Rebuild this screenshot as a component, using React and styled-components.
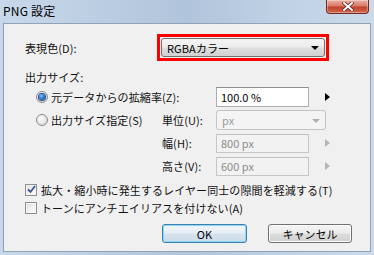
import React, { useState } from "react";
import styled, { createGlobalStyle } from "styled-components";

const GlobalStyle = createGlobalStyle`
  html, body {
    margin: 0;
    padding: 0;
    background: #ffffff;
  }
  body {
    font-family: "Noto Sans CJK JP", "Liberation Sans", sans-serif;
    font-size: 11px;
    color: #000;
  }
  * {
    box-sizing: border-box;
  }
`;

const Window = styled.div`
  width: 374px;
  height: 255px;
  display: flex;
  flex-direction: column;
  padding: 0 3px 3px 3px;
  background: linear-gradient(
    90deg,
    #c8d8ea 0%,
    #bccee2 25%,
    #b0c4db 50%,
    #bfd1e4 75%,
    #ccdaea 100%
  );
`;

const TitleBar = styled.div`
  height: 23px;
  display: flex;
  justify-content: space-between;
  align-items: flex-start;
`;

const Title = styled.div`
  padding-top: 3px;
  font-size: 12px;
  line-height: 15px;
  color: #000;
  letter-spacing: 0.2px;
`;

const CloseButton = styled.div`
  width: 43px;
  height: 14px;
  margin-right: 2px;
  display: flex;
  align-items: center;
  justify-content: center;
  border: 1px solid #6e2b22;
  border-top: none;
  border-radius: 0 0 4px 4px;
  background: linear-gradient(
    180deg,
    #eab1a4 0%,
    #d97a66 45%,
    #c2432d 55%,
    #d4664e 100%
  );
  box-shadow: inset 0 0 0 1px rgba(255, 255, 255, 0.35);
`;

const Client = styled.div`
  flex: 1;
  border: 1px solid #8ea2b8;
  background: #f0f0f0;
  padding: 10px 18px 0 21px;
  display: flex;
  flex-direction: column;
  letter-spacing: 0.1px;
  color: #111;
`;

const Row = styled.div`
  display: flex;
  align-items: center;
  height: ${(p) => p.$height || 20}px;
  margin-top: ${(p) => p.$top || 0}px;
  padding-left: ${(p) => p.$indent || 0}px;
`;

const Label = styled.span`
  width: ${(p) => (p.$width ? `${p.$width}px` : "auto")};
  flex-shrink: 0;
  line-height: 14px;
  white-space: nowrap;
`;

const Highlight = styled.div`
  width: 172px;
  height: 27px;
  border: 3px solid #ff0000;
  padding: 1px;
  background: #f0f0f0;
`;

const Combo = styled.div`
  width: ${(p) => (p.$width ? `${p.$width}px` : "100%")};
  height: ${(p) => p.$h || 19}px;
  display: flex;
  align-items: center;
  justify-content: space-between;
  padding: 0 5px 0 5px;
  border: 1px solid ${(p) => (p.$disabled ? "#c4c4c4" : "#707070")};
  border-radius: 3px;
  color: ${(p) => (p.$disabled ? "#9a9a9a" : "#000")};
  background: ${(p) =>
    p.$disabled
      ? "#f4f4f4"
      : "linear-gradient(180deg, #f4f4f4 0%, #ececec 48%, #dddddd 52%, #d2d2d2 100%)"};
  line-height: 14px;
`;

const DownArrow = styled.span`
  width: 0;
  height: 0;
  border-left: 4px solid transparent;
  border-right: 4px solid transparent;
  border-top: 4px solid ${(p) => (p.$disabled ? "#b0b0b0" : "#000")};
  margin-top: 1px;
`;

const TextBox = styled.div`
  width: 93px;
  height: ${(p) => p.$h || 20}px;
  display: flex;
  align-items: center;
  padding-left: 4px;
  border: 1px solid ${(p) => (p.$disabled ? "#c6c6c6" : "#abadb3")};
  border-top-color: ${(p) => (p.$disabled ? "#c0c0c0" : "#8e8f8f")};
  background: ${(p) => (p.$disabled ? "#f2f2f2" : "#ffffff")};
  color: ${(p) => (p.$disabled ? "#8c8c8c" : "#000")};
  line-height: 14px;
  letter-spacing: 0;
`;

const SpinArrow = styled.span`
  width: 0;
  height: 0;
  margin-left: 16px;
  border-top: 4px solid transparent;
  border-bottom: 4px solid transparent;
  border-left: 5px solid ${(p) => (p.$disabled ? "#b4b4b4" : "#000")};
`;

const RadioOption = styled.label`
  width: ${(p) => p.$width}px;
  display: flex;
  align-items: center;
  gap: 3px;
  flex-shrink: 0;
  line-height: 14px;
  white-space: nowrap;
`;

const RadioCircle = styled.span`
  width: 12px;
  height: 12px;
  border-radius: 50%;
  border: 1px solid #8a8a8a;
  background: radial-gradient(circle at 40% 35%, #ffffff 0%, #e4e4e4 60%, #cfcfcf 100%);
  display: flex;
  align-items: center;
  justify-content: center;
  flex-shrink: 0;
`;

const RadioDot = styled.span`
  width: 6px;
  height: 6px;
  border-radius: 50%;
  background: radial-gradient(circle at 40% 35%, #7fc3ff 0%, #1f6fd0 55%, #0b3f8a 100%);
  box-shadow: 0 0 0 1px #2a4f86;
`;

const CheckRow = styled.label`
  display: flex;
  align-items: center;
  gap: 4px;
  height: 15px;
  margin-top: ${(p) => p.$top || 0}px;
  line-height: 14px;
  white-space: nowrap;
`;

const CheckBox = styled.span`
  width: 12px;
  height: 12px;
  border: 1px solid #8e8f8f;
  background: linear-gradient(135deg, #dcdcdc 0%, #f4f4f4 60%, #ffffff 100%);
  box-shadow: inset 0 0 0 1px #f4f4f4;
  display: flex;
  align-items: center;
  justify-content: center;
  flex-shrink: 0;
`;

const ButtonRow = styled.div`
  display: flex;
  justify-content: flex-end;
  gap: 21px;
  margin-top: 9px;
`;

const Button = styled.button`
  width: ${(p) => p.$width}px;
  height: 19px;
  padding: 0;
  font-family: inherit;
  font-size: 11px;
  line-height: 14px;
  color: #000;
  border-radius: 3px;
  border: 1px solid ${(p) => (p.$default ? "#3c7fb1" : "#707070")};
  background: ${(p) =>
    p.$default
      ? "linear-gradient(180deg, #f0f6fa 0%, #e5eef5 48%, #d6e3ee 52%, #cbdbe8 100%)"
      : "linear-gradient(180deg, #f4f4f4 0%, #ececec 48%, #dddddd 52%, #d0d0d0 100%)"};
  box-shadow: ${(p) =>
    p.$default ? "inset 0 0 0 1px #8fd6f5" : "inset 0 0 0 1px #fbfbfb"};
`;

const Radio = ({ checked, width, children }) => (
  <RadioOption $width={width}>
    <RadioCircle>{checked && <RadioDot />}</RadioCircle>
    {children}
  </RadioOption>
);

const Check = ({ checked, top, children }) => (
  <CheckRow $top={top}>
    <CheckBox>
      {checked && (
        <svg width="9" height="9" viewBox="0 0 9 9">
          <path d="M1 4.5 L3.5 7 L8 1" fill="none" stroke="#3a5694" strokeWidth="1.8" />
        </svg>
      )}
    </CheckBox>
    {children}
  </CheckRow>
);

const App = () => {
  const [mode] = useState("scale");

  return (
    <>
      <GlobalStyle />
      <Window>
        <TitleBar>
          <Title>PNG 設定</Title>
          <CloseButton>
            <svg width="12" height="9" viewBox="0 0 12 9">
              <path
                d="M2 1 L10 8 M10 1 L2 8"
                stroke="#5a2018"
                strokeWidth="3.4"
                strokeLinecap="square"
              />
              <path
                d="M2 1 L10 8 M10 1 L2 8"
                stroke="#ffffff"
                strokeWidth="2"
                strokeLinecap="square"
              />
            </svg>
          </CloseButton>
        </TitleBar>
        <Client>
          <Row $height={27}>
            <Label $width={132}>表現色(D):</Label>
            <Highlight>
              <Combo>
                <span>RGBAカラー</span>
                <DownArrow />
              </Combo>
            </Highlight>
          </Row>

          <Row $height={14} $top={9}>
            <Label>出力サイズ:</Label>
          </Row>

          <Row $top={3} $indent={11}>
            <Radio checked={mode === "scale"} width={180}>
              元データからの拡縮率(Z):
            </Radio>
            <TextBox>100.0 %</TextBox>
            <SpinArrow />
          </Row>

          <Row $top={3} $indent={11}>
            <Radio checked={mode === "size"} width={126}>
              出力サイズ指定(S)
            </Radio>
            <Label $width={54}>単位(U):</Label>
            <Combo $width={110} $h={20} $disabled>
              <span>px</span>
              <DownArrow $disabled />
            </Combo>
          </Row>

          <Row $top={3} $indent={137}>
            <Label $width={54}>幅(H):</Label>
            <TextBox $disabled $h={19}>800 px</TextBox>
            <SpinArrow $disabled />
          </Row>

          <Row $top={3} $indent={137}>
            <Label $width={54}>高さ(V):</Label>
            <TextBox $disabled $h={19}>600 px</TextBox>
            <SpinArrow $disabled />
          </Row>

          <Check checked top={6}>
            拡大・縮小時に発生するレイヤー同士の隙間を軽減する(T)
          </Check>
          <Check top={3}>トーンにアンチエイリアスを付けない(A)</Check>

          <ButtonRow>
            <Button $default $width={85}>
              OK
            </Button>
            <Button $width={84}>キャンセル</Button>
          </ButtonRow>
        </Client>
      </Window>
    </>
  );
};

export default App;
